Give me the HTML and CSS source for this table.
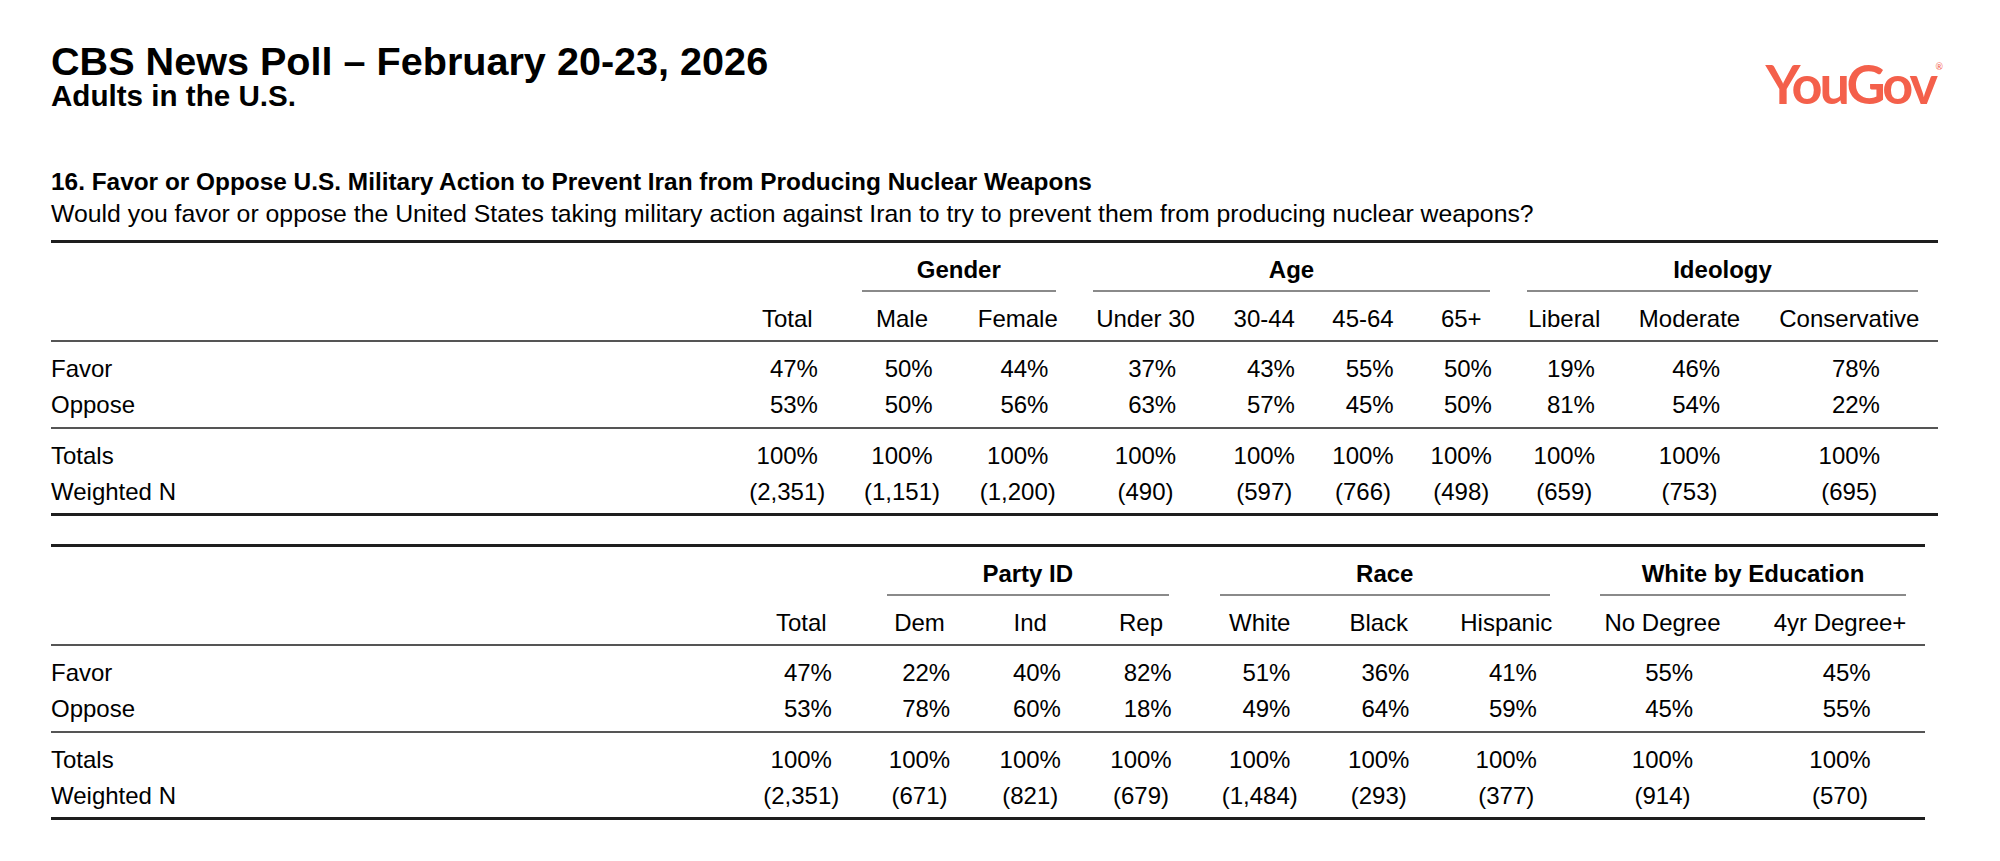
FILE: index.html
```html
<!DOCTYPE html>
<html lang="en">
<head>
<meta charset="utf-8">
<title>CBS News Poll – February 20-23, 2026</title>
<link rel="stylesheet" href="styles.css">
</head>
<body>
<div class="page">
  <header class="top">
    <div class="titles">
      <h1 class="title">CBS News Poll – February 20-23, 2026</h1>
      <h2 class="subtitle">Adults in the U.S.</h2>
    </div>
    <div class="logo">YouGov<span class="reg">®</span></div>
  </header>

  <section class="question">
    <h3 class="q-title">16. Favor or Oppose U.S. Military Action to Prevent Iran from Producing Nuclear Weapons</h3>
    <p class="q-text">Would you favor or oppose the United States taking military action against Iran to try to prevent them from producing nuclear weapons?</p>
  </section>

  <table class="xtab t1">
    <colgroup>
      <col class="c0"><col class="c1"><col class="c2"><col class="c3"><col class="c4"><col class="c5">
      <col class="c6"><col class="c7"><col class="c8"><col class="c9"><col class="c10">
    </colgroup>
    <thead>
      <tr class="grp">
        <th class="lab"></th>
        <th></th>
        <th class="g" colspan="2"><div>Gender</div></th>
        <th class="g" colspan="4"><div>Age</div></th>
        <th class="g" colspan="3"><div>Ideology</div></th>
      </tr>
      <tr class="cols">
        <th class="lab"></th>
        <th>Total</th><th>Male</th><th>Female</th><th>Under 30</th><th>30-44</th><th>45-64</th><th>65+</th><th>Liberal</th><th>Moderate</th><th>Conservative</th>
      </tr>
    </thead>
    <tbody class="resp">
      <tr>
        <td class="lab">Favor</td>
        <td><span class="p">47%</span></td><td><span class="p">50%</span></td><td><span class="p">44%</span></td><td><span class="p">37%</span></td><td><span class="p">43%</span></td><td><span class="p">55%</span></td><td><span class="p">50%</span></td><td><span class="p">19%</span></td><td><span class="p">46%</span></td><td><span class="p">78%</span></td>
      </tr>
      <tr>
        <td class="lab">Oppose</td>
        <td><span class="p">53%</span></td><td><span class="p">50%</span></td><td><span class="p">56%</span></td><td><span class="p">63%</span></td><td><span class="p">57%</span></td><td><span class="p">45%</span></td><td><span class="p">50%</span></td><td><span class="p">81%</span></td><td><span class="p">54%</span></td><td><span class="p">22%</span></td>
      </tr>
    </tbody>
    <tbody class="tot">
      <tr>
        <td class="lab">Totals</td>
        <td><span class="p">100%</span></td><td><span class="p">100%</span></td><td><span class="p">100%</span></td><td><span class="p">100%</span></td><td><span class="p">100%</span></td><td><span class="p">100%</span></td><td><span class="p">100%</span></td><td><span class="p">100%</span></td><td><span class="p">100%</span></td><td><span class="p">100%</span></td>
      </tr>
      <tr>
        <td class="lab">Weighted N</td>
        <td>(2,351)</td><td>(1,151)</td><td>(1,200)</td><td>(490)</td><td>(597)</td><td>(766)</td><td>(498)</td><td>(659)</td><td>(753)</td><td>(695)</td>
      </tr>
    </tbody>
  </table>

  <table class="xtab t2">
    <colgroup>
      <col class="c0"><col class="c1"><col class="c2"><col class="c3"><col class="c4"><col class="c5">
      <col class="c6"><col class="c7"><col class="c8"><col class="c9">
    </colgroup>
    <thead>
      <tr class="grp">
        <th class="lab"></th>
        <th></th>
        <th class="g" colspan="3"><div>Party ID</div></th>
        <th class="g" colspan="3"><div>Race</div></th>
        <th class="g g-last" colspan="2"><div>White by Education</div></th>
      </tr>
      <tr class="cols">
        <th class="lab"></th>
        <th>Total</th><th>Dem</th><th>Ind</th><th>Rep</th><th>White</th><th>Black</th><th>Hispanic</th><th>No Degree</th><th class="last">4yr Degree+</th>
      </tr>
    </thead>
    <tbody class="resp">
      <tr>
        <td class="lab">Favor</td>
        <td><span class="p">47%</span></td><td><span class="p">22%</span></td><td><span class="p">40%</span></td><td><span class="p">82%</span></td><td><span class="p">51%</span></td><td><span class="p">36%</span></td><td><span class="p">41%</span></td><td><span class="p">55%</span></td><td class="last"><span class="p">45%</span></td>
      </tr>
      <tr>
        <td class="lab">Oppose</td>
        <td><span class="p">53%</span></td><td><span class="p">78%</span></td><td><span class="p">60%</span></td><td><span class="p">18%</span></td><td><span class="p">49%</span></td><td><span class="p">64%</span></td><td><span class="p">59%</span></td><td><span class="p">45%</span></td><td class="last"><span class="p">55%</span></td>
      </tr>
    </tbody>
    <tbody class="tot">
      <tr>
        <td class="lab">Totals</td>
        <td><span class="p">100%</span></td><td><span class="p">100%</span></td><td><span class="p">100%</span></td><td><span class="p">100%</span></td><td><span class="p">100%</span></td><td><span class="p">100%</span></td><td><span class="p">100%</span></td><td><span class="p">100%</span></td><td class="last"><span class="p">100%</span></td>
      </tr>
      <tr>
        <td class="lab">Weighted N</td>
        <td>(2,351)</td><td>(671)</td><td>(821)</td><td>(679)</td><td>(1,484)</td><td>(293)</td><td>(377)</td><td>(914)</td><td class="last">(570)</td>
      </tr>
    </tbody>
  </table>
</div>
</body>
</html>
```

FILE: styles.css
```css
html, body {
  margin: 0;
  background: #ffffff;
  color: #000000;
  font-family: "Liberation Sans", Arial, Helvetica, sans-serif;
}

.page {
  width: 1887px;
  padding: 41px 0 0 51px;
}

/* ---------- header ---------- */
.top {
  display: flex;
  justify-content: space-between;
  align-items: flex-start;
}

.title {
  margin: 0;
  font-size: 39.6px;
  line-height: 40px;
  font-weight: 700;
}

.subtitle {
  margin: 0;
  font-size: 29.6px;
  line-height: 30px;
  font-weight: 700;
}

.logo {
  position: relative;
  margin-top: 16px;
  margin-right: 3px;
  font-family: Lato, "Liberation Sans", sans-serif;
  font-weight: 700;
  font-size: 54px;
  line-height: 54px;
  letter-spacing: -3px;
  color: #f4604b;
}

.logo .reg {
  position: absolute;
  right: -8px;
  top: 5px;
  font-size: 9px;
  line-height: 9px;
  letter-spacing: 0;
  font-weight: 400;
}

/* ---------- question ---------- */
.question {
  margin-top: 55px;
}

.q-title {
  margin: 0;
  font-size: 24.4px;
  line-height: 32px;
  font-weight: 700;
}

.q-text {
  margin: 0;
  font-size: 24.8px;
  line-height: 32px;
}

/* ---------- crosstabs ---------- */
.xtab {
  border-collapse: separate;
  border-spacing: 0;
  table-layout: fixed;
  font-size: 24px;
  line-height: 36px;
}

.xtab th,
.xtab td {
  padding: 0;
  white-space: nowrap;
  text-align: center;
  font-weight: 400;
}

.xtab .lab {
  text-align: left;
}

.grp th {
  border-top: 3px solid #1e1e1e;
  padding-top: 9px;
  font-weight: 700;
}

.grp .g div {
  padding-bottom: 2px;
  border-bottom: 2px solid #8a8a8a;
}

.cols th {
  padding-top: 9px;
  padding-bottom: 3px;
  border-bottom: 2px solid #555;
}

.resp tr:first-child td,
.tot tr:first-child td {
  padding-top: 9px;
}

.resp tr:last-child td {
  padding-bottom: 4px;
  border-bottom: 2px solid #555;
}

.tot tr:last-child td {
  padding-bottom: 3px;
  border-bottom: 3px solid #1e1e1e;
}

.p {
  display: inline-block;
  width: 2.557em;
  text-align: right;
}

/* table 1 */
.t1 {
  width: 1887px;
  margin-top: 10px;
}
.t1 .c0 { width: 679px; }
.t1 .c1 { width: 114.5px; }
.t1 .c2 { width: 115px; }
.t1 .c3 { width: 116.5px; }
.t1 .c4 { width: 139px; }
.t1 .c5 { width: 98.5px; }
.t1 .c6 { width: 99px; }
.t1 .c7 { width: 97.5px; }
.t1 .c8 { width: 108.5px; }
.t1 .c9 { width: 142px; }
.t1 .c10 { width: 177.5px; }
.t1 .g div { margin: 0 20px 0 17px; }

/* table 2 */
.t2 {
  width: 1874px;
  margin-top: 28px;
}
.t2 .c0 { width: 687.5px; }
.t2 .c1 { width: 125.5px; }
.t2 .c2 { width: 111px; }
.t2 .c3 { width: 110.5px; }
.t2 .c4 { width: 111px; }
.t2 .c5 { width: 126.5px; }
.t2 .c6 { width: 111.5px; }
.t2 .c7 { width: 143.5px; }
.t2 .c8 { width: 169px; }
.t2 .c9 { width: 178px; }
.t2 .g div { margin: 0 28px 0 23px; }
.t2 .g-last div { margin: 0 19px 0 22px; }
.t2 .last { padding-left: 8px; }
```
